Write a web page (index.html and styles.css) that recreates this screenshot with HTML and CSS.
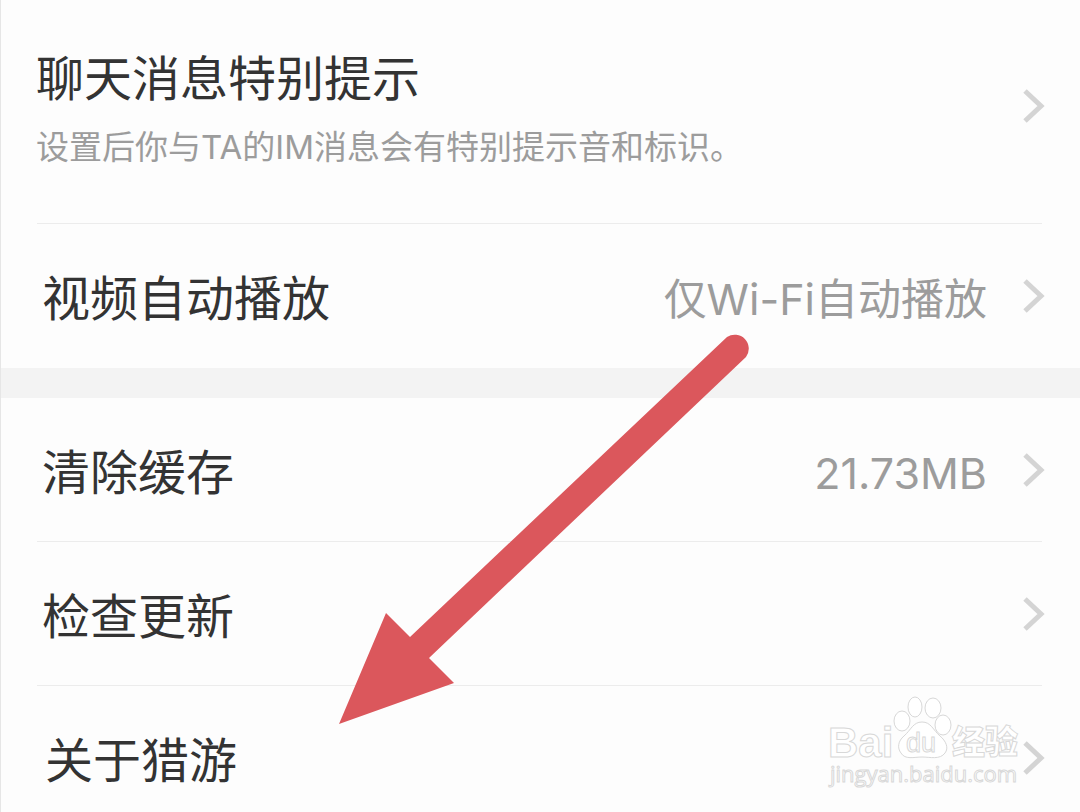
FILE: index.html
```html
<!DOCTYPE html>
<html lang="zh-CN">
<head>
    <meta charset="UTF-8">
    <meta name="viewport" content="width=device-width, initial-scale=1.0">
    <title>设置</title>
    <link rel="stylesheet" href="styles.css">
</head>
<body>

    <main class="settings">
        <!-- Messages and video -->
        <nav class="group">
            <a class="row row-tall" href="#message-alert">
                <span class="text">
                    <span class="title">聊天消息特别提示</span>
                    <span class="desc">设置后你与TA的IM消息会有特别提示音和标识。</span>
                </span>
                <svg class="chevron" viewBox="0 0 24 36"><path d="M4 3L20 18L4 33"/></svg>
            </a>
            <a class="row" href="#autoplay">
                <span class="text title">视频自动播放</span>
                <span class="text value">仅Wi-Fi自动播放</span>
                <svg class="chevron" viewBox="0 0 24 36"><path d="M4 3L20 18L4 33"/></svg>
            </a>
        </nav>

        <!-- App -->
        <nav class="group">
            <a class="row" href="#cache">
                <span class="text title">清除缓存</span>
                <span class="text value">21.73MB</span>
                <svg class="chevron" viewBox="0 0 24 36"><path d="M4 3L20 18L4 33"/></svg>
            </a>
            <a class="row" href="#update">
                <span class="text title">检查更新</span>
                <svg class="chevron" viewBox="0 0 24 36"><path d="M4 3L20 18L4 33"/></svg>
            </a>
            <a class="row row-about" href="#about">
                <span class="text title">关于猎游</span>
                <svg class="chevron" viewBox="0 0 24 36"><path d="M4 3L20 18L4 33"/></svg>
            </a>
        </nav>
    </main>

    <!-- Pointer to the about row -->
    <svg class="arrow" viewBox="0 0 412 392">
        <path d="M0 391L47 280L71 304L388 4A14 14 0 0 1 407 24L90 325L115 350Z"/>
    </svg>

    <!-- Watermark -->
    <svg class="watermark" viewBox="0 0 200 100">
        <text class="brand" x="0" y="61">Bai</text>
        <ellipse cx="74" cy="25" rx="8" ry="10"/>
        <ellipse cx="87" cy="11" rx="7" ry="10"/>
        <ellipse cx="105" cy="12" rx="8" ry="10"/>
        <ellipse cx="115" cy="29" rx="8" ry="10"/>
        <path d="M94 26C85 26 83 34 76 40C70 45 69 52 73 57C77 64 86 61 94 61C102 61 112 64 117 57C121 52 118 45 112 40C105 34 103 26 94 26Z"/>
        <text class="du" x="78" y="56">du</text>
        <text class="cjk" x="124" y="58">经验</text>
        <text class="url" x="2" y="86">jingyan.baidu.com</text>
    </svg>

</body>
</html>
```

FILE: styles.css
```css
/* Global Styles */
* {
    box-sizing: border-box;
}

body {
    position: relative;
    height: 100vh;
    margin: 0;
    overflow: hidden;
    background-color: #fdfdfd;
    border-left: 1px solid #e6e6e6;
    font-family: Inter, 'Noto Sans CJK SC', sans-serif;
    color: #333;
}

/* Groups */
.group + .group {
    border-top: 30px solid #f3f3f3;
}

/* Rows */
.row {
    position: relative;
    display: flex;
    align-items: center;
    height: 144px;
    padding: 0 35px 0 41px;
    color: inherit;
    text-decoration: none;
}

.row-tall {
    height: 224px;
    padding: 0 35px 12px 35px;
}

.row-about {
    padding-left: 44px;
}

.row:not(:last-child)::after {
    content: "";
    position: absolute;
    left: 36px;
    right: 38px;
    bottom: 0;
    height: 1px;
    background-color: #ececec;
}

.text {
    display: flex;
    flex-direction: column;
    gap: 12px;
    padding-top: 6px;
}

.title {
    font-size: 48px;
    line-height: 64px;
}

.desc {
    font-size: 33px;
    line-height: 48px;
    color: #9c9c9c;
}

.value {
    margin-left: auto;
    font-size: 43px;
    line-height: 56px;
    color: #9c9c9c;
}

.chevron {
    flex: none;
    width: 24px;
    height: 36px;
    margin-left: auto;
    fill: none;
    stroke: #d4d4d4;
    stroke-width: 5;
}

.value + .chevron {
    margin-left: 34px;
}

/* Arrow */
.arrow {
    position: absolute;
    left: 338px;
    top: 333px;
    width: 412px;
    height: 392px;
    fill: #db575c;
}

/* Watermark */
.watermark {
    position: absolute;
    right: 52px;
    bottom: 16px;
    width: 200px;
    height: 100px;
    overflow: visible;
    fill: #fff;
    stroke: #d8d8d8;
    stroke-width: 1;
}

.brand {
    font: bold 42px 'Liberation Sans', sans-serif;
}

.du {
    font: 27px 'Liberation Sans', sans-serif;
}

.cjk {
    font: 900 33px 'Noto Sans CJK SC', sans-serif;
}

.url {
    font: 22px 'Open Sans', sans-serif;
}
```
